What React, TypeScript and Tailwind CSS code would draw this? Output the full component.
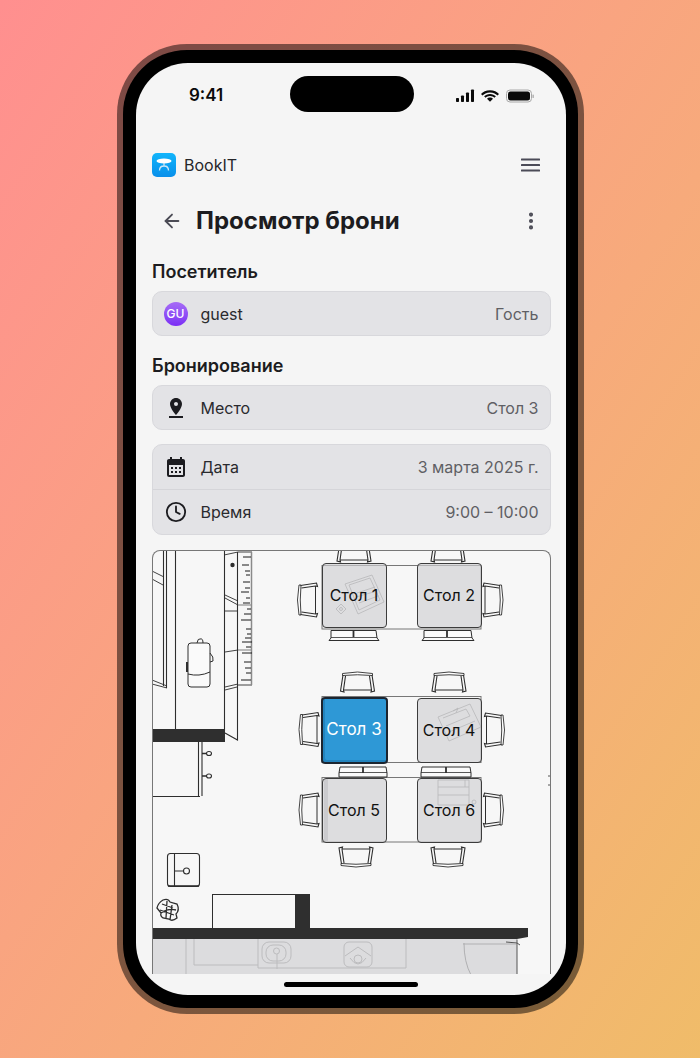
import React from "react";
import { ArrowLeft, Clock, EllipsisVertical } from "lucide-react";
import { MdCalendarMonth, MdPinDrop } from "react-icons/md";

const S = "#2e2e2e";

function Chair({ x, y, rot = 0 }: { x: number; y: number; rot?: number }) {
  return (
    <g transform={`translate(${x} ${y}) rotate(${rot})`} fill="none" stroke={S} strokeWidth="1">
      <path d="M-8.500 -15 Q-11.500 0 -8.500 15 L-6.500 15 Q-8 0 -6.500 -15 Z" fill="#fff" strokeWidth="0.900" />
      <path d="M-7 -14.500 L9 -17 L10 -13.500 L8 -14 L-6 -12 M-7 14.500 L9 17 L10 13.500 L8 14 L-6 12" strokeWidth="1.100" />
      <path d="M8 -14V14" strokeWidth="1" />
    </g>
  );
}

function FloorSvg() {
  const ticks = [
    [243, 557, 8], [242, 565, 7], [245, 571, 5], [246, 575, 4], [243, 582, 7], [245, 588, 5], [241, 592, 8], [246, 598, 4], [243, 603, 7],
    [247, 609, 4], [244, 614, 7], [241, 620, 10], [246, 629, 5], [247, 634, 4], [245, 638, 6], [242, 642, 10], [246, 647, 5], [242, 653, 10],
    [244, 662, 7], [245, 668, 6], [246, 673, 5], [241, 680, 10],
  ];
  return (
    <svg className="absolute left-0 top-0 h-[425px] w-[399px]" viewBox="152 550 399 425" fill="none">
      {/* left wall and window */}
      <g stroke={S} strokeWidth="1.100">
        <path d="M175.500 550V729M163.500 550V686M166.500 550V688" />
        <path d="M152 571L164 577M152 579L163 585M152 680L167 686M152 684L167 688" strokeWidth="0.900" />
        <path d="M224.500 550V731M237.500 552V686" />
        <path d="M224 555L238 552M225 595L238 601M225 598L238 605M224 611H238M225 652L238 650M225 687L238 684M225 690L237 687" strokeWidth="0.900" />
        <path d="M237.500 686V740L225 733" />
        <path d="M238 552H252M238 685H252" strokeWidth="0.900" />
        <path d="M238 605H252M238 650H252" strokeWidth="0.600" />
      </g>
      <path d="M251.500 552V685" stroke="#8a8a8a" strokeWidth="1.500" />
      <g stroke="#1a1a1a" strokeWidth="1">
        {ticks.map(([x, y, w], i) => (
          <path key={i} d={`M${x} ${y}H${x + w}`} />
        ))}
      </g>
      <circle cx="232.500" cy="565" r="2.200" fill={S} />
      <rect x="152" y="729" width="73" height="13" fill="#2f2f2f" />
      {/* bag */}
      <g stroke={S} strokeWidth="1">
        <rect x="188" y="643" width="22" height="44" rx="3" fill="#fafafa" />
        <path d="M188 674Q199 677 210 672M197 643Q198 638 200 639Q203 638 203 643" />
        <path d="M210 653Q214 657 213 661L210 662" />
        <path d="M187 662V672" strokeWidth="2" />
      </g>
      {/* cabinet under the bar */}
      <g stroke={S} strokeWidth="1.100">
        <path d="M198.500 742V796M202 742V796M152 796.500H200" />
        <path d="M202 753.500H208M202 776H208" strokeWidth="1.500" />
        <ellipse cx="209" cy="753.500" rx="2.500" ry="2" fill="#fafafa" />
        <ellipse cx="209" cy="776" rx="2.500" ry="2" fill="#fafafa" />
      </g>
      {/* box + plant */}
      <g stroke={S} strokeWidth="1.100">
        <rect x="167.500" y="853.500" width="32" height="33" rx="3" />
        <path d="M174.500 854V886M175 871H184" />
        <path d="M168 886H199" strokeWidth="1.600" />
        <circle cx="186.500" cy="871" r="3" fill="#fafafa" />
        <path
          d="M163 900Q168 898 170 902L177 904Q180 910 176 914L177 918Q172 922 169 919L163 918Q160 916 161 913L157 908Q158 903 163 900ZM162 904L173 908M160 910L174 915M167 901L166 918M172 905L170 920M161 913Q168 908 176 910"
          strokeWidth="1.300"
        />
      </g>
      <rect x="212.500" y="894.500" width="83" height="34" stroke={S} />
      <rect x="295" y="894" width="15" height="34" fill="#2f2f2f" />
      {/* kitchen */}
      <rect x="152" y="939" width="365" height="36" fill="#dcdcde" />
      <path d="M152 928H528V937L517 939H152Z" fill="#2f2f2f" />
      <path d="M517 939.500V975M506 942L517 943L520 945" stroke="#555" strokeWidth="1" />
      <g stroke="#bcbcbe" strokeWidth="1">
        <path d="M186 939V975M194 939V965H258M258 939V968H406V939" />
        <rect x="262" y="942" width="29" height="21" rx="7" />
        <rect x="266" y="945" width="20" height="16" rx="7" />
        <circle cx="276.500" cy="951" r="3" />
        <path d="M277 954V969" />
        <rect x="344" y="942" width="28" height="25" rx="5" />
        <path d="M345 956L358 947L371 956M350 958Q358 970 366 958" />
        <circle cx="358" cy="959" r="4" />
      </g>
      <path d="M463 944H516M464 943Q464 962 471 975" stroke="#b0b0b2" strokeWidth="1" />
      <path d="M548 776H550M548 785H550" stroke="#555" strokeWidth="1" />
      {/* table tops */}
      <g stroke="#777" strokeWidth="1" fill="#f7f7f7">
        <rect x="322" y="565.500" width="159" height="63.500" />
        <rect x="322" y="696.500" width="159" height="66" />
        <rect x="322" y="777.500" width="159" height="64.500" />
      </g>
      {/* drawings on the tables */}
      <g stroke="#8c8c8c" strokeWidth="0.800">
        <path d="M345 584L372 575L384 602L358 614Z" />
        <path d="M349 585L370 578L380 600L359 610Z" />
        <path d="M357 593L375 587M356 597L377 591M359 603L378 596L376 590" />
        <path d="M336 609L341 604L346 609L341 614Z" />
        <circle cx="341" cy="609" r="1.500" />
        <path d="M438 717L470 704L481 727L449 741Z" />
        <path d="M443 718L466 709L470 716L446 726M449 732L475 721" />
        <path d="M453 711L458 708L456 713" />
        <path d="M438 780H469V805H438ZM438 787H469M438 795H469M465 780V787" />
        <circle cx="474" cy="802" r="2" />
      </g>
      <rect x="324" y="779" width="4" height="62" fill="#c4c4c6" />
      {/* chairs */}
      <Chair x={307.500} y={600} />
      <Chair x={493} y={600} rot={180} />
      <Chair x={309} y={729.500} />
      <Chair x={494.500} y={730} rot={180} />
      <Chair x={309} y={810} />
      <Chair x={493.500} y={810} rot={180} />
      <Chair x={357.500} y={682} rot={90} />
      <Chair x={449} y={682} rot={90} />
      <Chair x={356} y={857} rot={-90} />
      <Chair x={448} y={857} rot={-90} />
      <Chair x={354} y={552} rot={90} />
      <Chair x={448} y={552} rot={90} />
      {/* backs of the chairs that stand under the tables */}
      <g stroke={S} strokeWidth="1" fill="#fafafa">
        <path d="M331 630.500H376L377 638L379 640.500H329L331 638Z" />
        <path d="M331 637.500H377" strokeWidth="0.800" />
        <path d="M424 630.500H471L472 638L474 640.500H422L424 638Z" />
        <path d="M424 637.500H472" strokeWidth="0.800" />
        <path d="M340 767H386L387 773V777H339V773Z" />
        <path d="M339 772.500H387" strokeWidth="0.800" />
        <path d="M422 767H470L471 773V777H421V773Z" />
        <path d="M421 772.500H471" strokeWidth="0.800" />
        <path d="M353.500 631V637M447 631V637M363 767V773M446 767V773" strokeWidth="1.800" />
      </g>
    </svg>
  );
}

function Table({ label, selected, cls }: { label: string; selected?: boolean; cls: string }) {
  return (
    <div
      className={`absolute flex items-center justify-center rounded-[4px] border pb-[2px] ${cls} ${
        selected
          ? "border-[2px] border-[#1c2530] bg-[#2e98d6] text-[17px] text-white shadow-[inset_2px_-2px_0_#2384be]"
          : "border-[#3c3c3c] bg-[#cfcfd3]/65 text-[16px] text-[#111]"
      }`}
    >
      {label}
    </div>
  );
}

function Row({ icon, label, value, h, border }: { icon: React.ReactNode; label: string; value: string; h: string; border?: boolean }) {
  return (
    <div className={`flex items-center px-[11px] ${h} ${border ? "border-t border-[#d5d5d9]" : ""}`}>
      <div className="flex w-[24px] items-center justify-center">{icon}</div>
      <span className="ml-[13px] text-[16px] text-[#2a2a2e]">{label}</span>
      <span className="ml-auto text-[16px] text-[#5f5f64]">{value}</span>
    </div>
  );
}

function Card({ children }: { children: React.ReactNode }) {
  return <div className="rounded-[10px] border border-[#d8d8dc] bg-[#e3e3e6]">{children}</div>;
}

function StatusIcons() {
  return (
    <svg width="79" height="14" viewBox="0 0 79 14" fill="#0a0a0a">
      <rect x="1" y="9" width="3" height="4" rx="0.800" />
      <rect x="6" y="6.500" width="3" height="6.500" rx="0.800" />
      <rect x="11" y="3.500" width="3" height="9.500" rx="0.800" />
      <rect x="16" y="0.500" width="3" height="12.500" rx="0.800" />
      <path d="M35 3.500C31.500 3.500 29 5 27.500 6.500L26 5C28 3 31 1.300 35 1.300S42 3 44 5L42.500 6.500C41 5 38.500 3.500 35 3.500Z" />
      <path d="M35 7C33 7 31.700 7.800 30.600 8.800L29.100 7.300C30.500 6 32.500 4.900 35 4.900S39.500 6 40.900 7.300L39.400 8.800C38.300 7.800 37 7 35 7Z" />
      <path d="M35 8.500C36.300 8.500 37.200 9 38 9.700L35 12.800L32 9.700C32.800 9 33.700 8.500 35 8.500Z" />
      <rect x="51.500" y="1" width="25" height="12" rx="3.500" fill="none" stroke="#a8a8a8" strokeWidth="1" />
      <rect x="53" y="2.500" width="22" height="9" rx="2.500" />
      <rect x="77.500" y="5.500" width="1.300" height="3.500" rx="0.600" fill="#a8a8a8" />
    </svg>
  );
}

function Logo() {
  return (
    <div className="flex h-[24px] w-[24px] items-center justify-center rounded-[5px] bg-gradient-to-b from-[#12b5fb] to-[#0a8fea]">
      <svg width="16" height="14" viewBox="0 0 16 14" fill="none">
        <ellipse cx="8" cy="3" rx="7.500" ry="2.500" fill="#fff" />
        <path d="M8 5V8M8 8Q3.500 8 3.500 12.500M8 8Q12.500 8 12.500 12.500" stroke="#cfe6f5" strokeWidth="1.300" />
      </svg>
    </div>
  );
}

function Hamburger() {
  return (
    <svg className="ml-auto" width="19" height="14" viewBox="0 0 19 14" fill="#4b4b57">
      <rect x="0" y="0.500" width="19" height="2" rx="0.500" />
      <rect x="0" y="6" width="19" height="2" rx="0.500" />
      <rect x="0" y="11.500" width="19" height="2" rx="0.500" />
    </svg>
  );
}

export default function App() {
  return (
    <div
      className="flex h-[1058px] w-[700px] items-start bg-gradient-to-br from-[#ff8f8f] to-[#f0bc69] pl-[117px] pt-[44px]"
      style={{ fontFamily: 'Inter, "Noto Sans", sans-serif' }}
    >
      <div className="h-[970px] w-[467px] rounded-[70px] bg-black/50 p-[6px]">
        <div className="h-[958px] w-[455px] rounded-[64px] bg-black pb-[13px] pl-[13px] pr-[12px] pt-[13px]">
          <div className="relative flex h-[932px] w-[430px] flex-col overflow-hidden rounded-[52px] bg-[#f5f5f5]">
            {/* status bar */}
            <div className="relative flex h-[66px] shrink-0 items-center pl-[53px] pr-[32px]">
              <span className="mt-[-1px] text-[17px] font-semibold text-[#0a0a0a]">9:41</span>
              <div className="absolute left-[154px] top-[13px] h-[36px] w-[124px] rounded-full bg-black" />
              <div className="ml-auto mt-[-1px]"><StatusIcons /></div>
            </div>

            {/* app header */}
            <div className="mt-[24px] flex h-[24px] shrink-0 items-center pl-[16px] pr-[26px]">
              <Logo />
              <span className="ml-[8px] text-[16px] text-[#26262a]">BookIT</span>
              <Hamburger />
            </div>

            {/* title */}
            <div className="mt-[28px] flex h-[32px] shrink-0 items-center pl-[25px] pr-[24px]">
              <ArrowLeft className="text-[#4b4b55]" size={22} strokeWidth={2} />
              <h1 className="ml-[13px] text-[24px] font-bold leading-[32px] text-[#1c1c20]">Просмотр брони</h1>
              <EllipsisVertical className="ml-auto text-[#4b4b55]" size={22} strokeWidth={2.500} />
            </div>

            <div className="mt-[23px] flex flex-col px-[15.500px]">
              <h2 className="pl-[0.500px] text-[18px] font-semibold leading-[24px] text-[#1c1c20]">Посетитель</h2>
              <div className="mt-[7px]">
                <Card>
                  <div className="flex h-[43px] items-center px-[11px]">
                    <div className="flex h-[24px] w-[24px] items-center justify-center rounded-full bg-gradient-to-b from-[#a76bf5] to-[#7c2cf5] text-[12px] font-medium text-white">GU</div>
                    <span className="ml-[13px] text-[16px] text-[#2a2a2e]">guest</span>
                    <span className="ml-auto text-[16px] text-[#5f5f64]">Гость</span>
                  </div>
                </Card>
              </div>

              <h2 className="mt-[18px] pl-[0.500px] text-[18px] font-semibold leading-[24px] text-[#1c1c20]">Бронирование</h2>
              <div className="mt-[7px]">
                <Card>
                  <Row h="h-[43px]" icon={<MdPinDrop size={24} className="text-[#1c1c20]" />} label="Место" value="Стол 3" />
                </Card>
              </div>
              <div className="mt-[14px]">
                <Card>
                  <Row h="h-[44px]" icon={<MdCalendarMonth size={24} className="text-[#1c1c20]" />} label="Дата" value="3 марта 2025 г." />
                  <Row h="h-[45px]" border icon={<Clock size={22} strokeWidth={2} className="text-[#1c1c20]" />} label="Время" value="9:00 – 10:00" />
                </Card>
              </div>

              {/* floor plan */}
              <div className="relative mt-[15px] h-[424px] w-[399px] overflow-hidden rounded-t-[8px] border-x border-t border-[#777] bg-[#f7f7f7]">
                <div className="absolute left-[-1px] top-[-1px] h-[425px] w-[399px]">
                  <FloorSvg />
                  <Table label="Стол 1" cls="left-[170px] top-[13px] h-[65px] w-[65px]" />
                  <Table label="Стол 2" cls="left-[265px] top-[13px] h-[65px] w-[65px]" />
                  <Table label="Стол 3" selected cls="left-[169px] top-[147px] h-[67px] w-[67px]" />
                  <Table label="Стол 4" cls="left-[265px] top-[148px] h-[65px] w-[65px]" />
                  <Table label="Стол 5" cls="left-[170px] top-[228px] h-[65px] w-[65px]" />
                  <Table label="Стол 6" cls="left-[265px] top-[228px] h-[65px] w-[65px]" />
                </div>
              </div>
            </div>

            {/* home indicator */}
            <div className="absolute bottom-[8px] left-[148px] h-[5px] w-[134px] rounded-full bg-black" />
          </div>
        </div>
      </div>
    </div>
  );
}
